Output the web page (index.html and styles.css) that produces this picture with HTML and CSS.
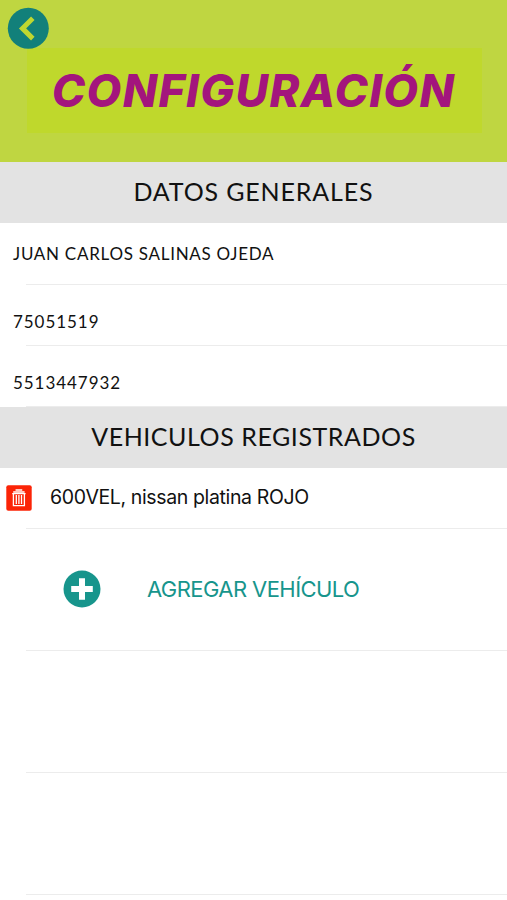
FILE: index.html
```html
<!DOCTYPE html>
<html lang="es">
  <head>
    <meta charset="utf-8">
    <title>Configuración</title>
    <link rel="stylesheet" href="styles.css">
  </head>
  <body>
    <header class="top">
      <a class="back" href="#" aria-label="Regresar">
        <svg width="42" height="42" viewBox="0 0 42 42">
          <circle cx="21.3" cy="21.3" r="20.5" fill="#12807a"/>
          <path d="M25.8 11.2L15.5 21.4l10.3 10.2" fill="none" stroke="#bfd730" stroke-width="5"/>
        </svg>
      </a>
      <h1 class="title"><span>CONFIGURACIÓN</span></h1>
    </header>

    <h2 class="section"><span class="generales">DATOS GENERALES</span></h2>
    <div class="row first"><span class="nombre">JUAN CARLOS SALINAS OJEDA</span></div>
    <div class="row low"><span class="numero">75051519</span></div>
    <div class="row low"><span class="numero">5513447932</span></div>

    <h2 class="section"><span class="vehiculos">VEHICULOS REGISTRADOS</span></h2>
    <div class="row vehicle">
      <svg class="trash" width="26" height="26" viewBox="0 0 26 26">
        <rect x="0.3" y="0.3" width="25.4" height="25.4" rx="2" fill="#fb2407"/>
        <g fill="none" stroke="#fff" stroke-width="1.3">
          <path d="M10.2 5.8V5h5.4v.8M6.2 8.6h13.4M7.2 7h11.4"/>
          <path d="M7.4 9v11.6h11V9M10.3 10v9M12.9 10v9M15.5 10v9"/>
        </g>
      </svg>
      <span class="placa">600VEL, nissan platina ROJO</span>
    </div>
    <div class="row tall add">
      <svg width="38" height="38" viewBox="0 0 38 38">
        <circle cx="19" cy="19" r="18.5" fill="#17958c"/>
        <path d="M19 8.2v21.6M8.2 19h21.6" stroke="#fff" stroke-width="6"/>
      </svg>
      <span class="agregar">AGREGAR VEHÍCULO</span>
    </div>
    <div class="row tall"></div>
    <div class="row tall"></div>
  </body>
</html>
```
FILE: styles.css
```css
* { box-sizing: border-box; }

body {
  margin: 0;
  height: 900px;
  overflow: hidden;
  background: #fff;
  color: #111;
  font-family: Lato, sans-serif;
}

/* HEADER ====================================== */
.top {
  height: 162px;
  padding: 48px 25px 0 27px;
  background: #bfd641;
  position: relative;
}
.back {
  position: absolute;
  top: 7px;
  left: 7px;
  height: 42px;
}
.title {
  margin: 0;
  padding-right: 2px;
  height: 85px;
  background: #bfd82c;
  color: #a3157d;
  font: italic 800 45px/85px Inter, sans-serif;
  letter-spacing: 1.3px;
  text-align: center;
  white-space: nowrap;
}

/* SECTIONS ==================================== */
.section {
  display: flex;
  align-items: center;
  justify-content: center;
  margin: 0;
  padding-bottom: 4px;
  height: 61px;
  background: #e3e3e3;
  font-size: 25px;
  font-weight: 400;
}
.generales { letter-spacing: 0.85px; }
.vehiculos { letter-spacing: 0.55px; }

/* ROWS ======================================== */
.row {
  display: flex;
  align-items: center;
  height: 61px;
  padding-left: 13px;
  font-size: 17px;
  background: linear-gradient(#ececec, #ececec) 26px 100% / 100% 1px no-repeat;
}
.row.first {
  height: 62px;
  padding-bottom: 1px;
}
.row.low { padding-top: 11px; }
.row.tall { height: 122px; }

.nombre { letter-spacing: 0.72px; }
.numero { letter-spacing: 0.95px; }

.row.vehicle {
  padding-left: 6px;
  padding-bottom: 2px;
  font-family: Inter, sans-serif;
}
.placa {
  margin-left: 18px;
  padding-bottom: 2px;
  font-size: 19.5px;
  letter-spacing: -0.37px;
}

.row.add {
  padding-left: 63px;
  padding-bottom: 2px;
  color: #17958c;
  font-family: Inter, sans-serif;
}
.agregar {
  margin-left: 46px;
  font-size: 22px;
  letter-spacing: -0.57px;
}
```
